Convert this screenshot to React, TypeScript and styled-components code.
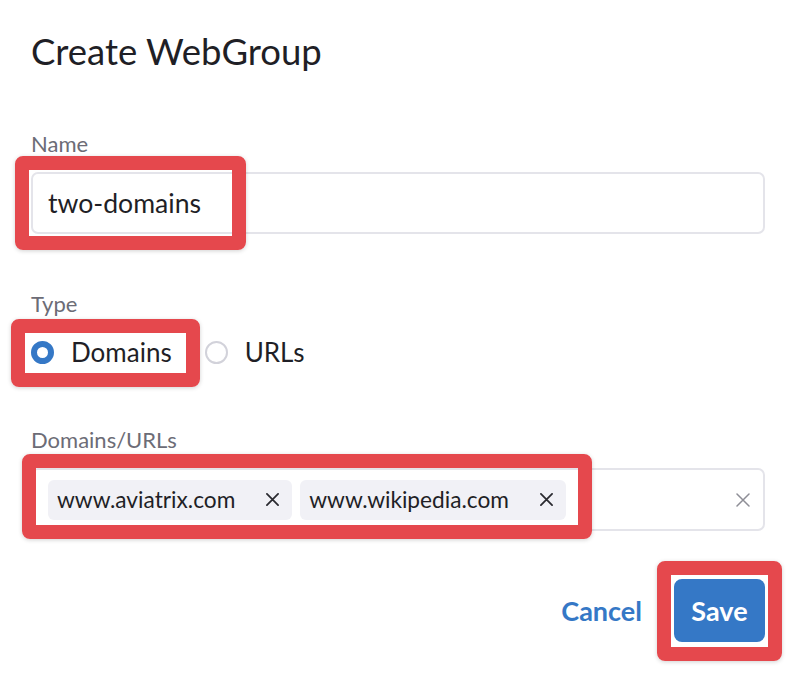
import React from "react";
import styled, { createGlobalStyle } from "styled-components";

const Global = createGlobalStyle`
  html, body { margin: 0; padding: 0; background: #ffffff; }
  body { font-family: Lato, "Noto Sans", sans-serif; color: #1f1f26; }
  * { box-sizing: border-box; }
`;

const Page = styled.div`
  width: 794px;
  height: 674px;
  padding: 25px 29px 0 31px;
  display: flex;
  flex-direction: column;
  overflow: hidden;
`;

const Title = styled.h1`
  margin: 0;
  font-size: 36.5px;
  font-weight: 400;
  line-height: 52px;
  color: #1f1f26;
`;

const Field = styled.div<{ $top: number }>`
  margin-top: ${(p) => p.$top}px;
  display: flex;
  flex-direction: column;
`;

const Label = styled.label`
  font-size: 22px;
  line-height: 26px;
  color: #6c6c76;
  margin-bottom: 15px;
`;

const Anchor = styled.div`
  position: relative;
`;

const Ring = styled.div<{ $l: number; $t: number; $w: number; $h: number }>`
  position: absolute;
  left: ${(p) => p.$l}px;
  top: ${(p) => p.$t}px;
  width: ${(p) => p.$w}px;
  height: ${(p) => p.$h}px;
  border: 14px solid #e5484d;
  border-radius: 8px;
  box-shadow: 0 1px 4px rgba(0, 0, 0, 0.18);
  pointer-events: none;
  z-index: 2;
`;

const TextInput = styled.div`
  height: 62px;
  border: 2px solid #e4e4ea;
  border-radius: 7px;
  padding: 0 15px;
  display: flex;
  align-items: center;
  font-size: 26.6px;
  color: #1f1f26;
`;

const RadioRow = styled.div`
  display: flex;
  align-items: center;
  height: 40px;
`;

const RadioOption = styled.div`
  display: flex;
  align-items: center;
  gap: 17px;
  font-size: 26px;
  margin-right: 33px;
`;

const RadioDot = styled.span<{ $checked?: boolean }>`
  width: 23px;
  height: 23px;
  border-radius: 50%;
  background: #fff;
  border: ${(p) => (p.$checked ? "6px solid #3578c6" : "2px solid #d2d2da")};
`;

const TagBox = styled.div`
  height: 63px;
  border: 2px solid #e4e4ea;
  border-radius: 7px;
  padding: 0 13px 0 15px;
  display: flex;
  align-items: center;
  gap: 8px;
`;

const Tag = styled.div`
  height: 40px;
  border-radius: 6px;
  background: #f1f1f6;
  display: flex;
  align-items: center;
  padding: 0 13px 0 9px;
  gap: 31px;
  font-size: 22.7px;
  color: #1f1f26;
`;

const Spacer = styled.div`
  flex: 1;
`;

const Actions = styled.div`
  margin-top: 48px;
  display: flex;
  justify-content: flex-end;
  align-items: center;
  gap: 32px;
`;

const LinkButton = styled.button`
  border: none;
  background: none;
  padding: 0;
  font-family: inherit;
  font-weight: 700;
  font-size: 27px;
  color: #3578c6;
`;

const PrimaryButton = styled.button`
  width: 91px;
  height: 63px;
  border: none;
  border-radius: 8px;
  background: #3578c6;
  color: #fff;
  font-family: inherit;
  font-weight: 700;
  font-size: 27px;
`;

const X = ({ size, color, w }: { size: number; color: string; w: number }) => (
  <svg width={size} height={size} viewBox="0 0 14 14">
    <path d="M1 1L13 13M13 1L1 13" stroke={color} strokeWidth={w} strokeLinecap="round" />
  </svg>
);

export default function App() {
  return (
    <>
      <Global />
      <Page>
        <Title>Create WebGroup</Title>
        <Field $top={54}>
          <Label>Name</Label>
          <Anchor>
            <TextInput>two-domains</TextInput>
            <Ring $l={-16} $t={-16} $w={231} $h={94} />
          </Anchor>
        </Field>
        <Field $top={57}>
          <Label>Type</Label>
          <Anchor>
            <RadioRow>
              <RadioOption>
                <RadioDot $checked />
                Domains
              </RadioOption>
              <RadioOption>
                <RadioDot />
                URLs
              </RadioOption>
            </RadioRow>
            <Ring $l={-20} $t={-13} $w={189} $h={68} />
          </Anchor>
        </Field>
        <Field $top={55}>
          <Label>Domains/URLs</Label>
          <Anchor>
            <TagBox>
              <Tag>
                www.aviatrix.com
                <X size={13} color="#2a2a30" w={1.9} />
              </Tag>
              <Tag>
                www.wikipedia.com
                <X size={13} color="#2a2a30" w={1.9} />
              </Tag>
              <Spacer />
              <X size={14} color="#8e8e96" w={1.5} />
            </TagBox>
            <Ring $l={-9} $t={-14} $w={570} $h={85} />
          </Anchor>
        </Field>
        <Actions>
          <LinkButton>Cancel</LinkButton>
          <Anchor>
            <PrimaryButton>Save</PrimaryButton>
            <Ring $l={-17} $t={-18} $w={125} $h={100} />
          </Anchor>
        </Actions>
      </Page>
    </>
  );
}
